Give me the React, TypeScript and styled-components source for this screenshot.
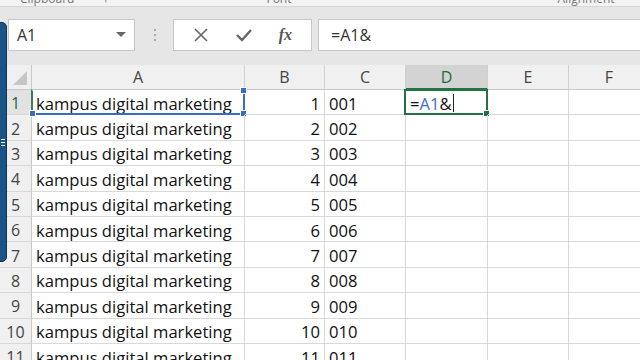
import styled, { createGlobalStyle } from "styled-components";

const GlobalStyle = createGlobalStyle`
  html, body {
    margin: 0;
    padding: 0;
    background: #e6e6e6;
    overflow: hidden;
  }
  body {
    font-family: "Open Sans", "Noto Sans", sans-serif;
  }
`;

const Page = styled.div`
  position: relative;
  width: 640px;
  height: 360px;
  overflow: hidden;
  background: #ffffff;
`;

const RibbonEdge = styled.div`
  height: 6px;
  background: #f3f3f3;
  border-bottom: 1px solid #d6d6d6;
  overflow: hidden;
  display: flex;
  font-size: 12px;
  color: #777;
  line-height: 12px;

  span {
    margin-top: -7px;
  }
`;

const FormulaRow = styled.div`
  display: flex;
  align-items: center;
  height: 58px;
  background: #e6e6e6;
`;

const NameBox = styled.div`
  display: flex;
  align-items: center;
  justify-content: space-between;
  box-sizing: border-box;
  width: 127px;
  height: 32px;
  margin-left: 8px;
  margin-top: -3px;
  padding: 0 8px 0 8px;
  background: #fff;
  border: 1px solid #c6c6c6;
  font-size: 16px;
  color: #333;
`;

const Caret = styled.div`
  width: 0;
  height: 0;
  border-left: 5px solid transparent;
  border-right: 5px solid transparent;
  border-top: 5px solid #666;
`;

const Dots = styled.div`
  display: flex;
  flex-direction: column;
  gap: 3px;
  margin: -3px 17px 0 19px;

  i {
    width: 2px;
    height: 2px;
    border-radius: 1px;
    background: #999;
  }
`;

const ButtonBox = styled.div`
  display: flex;
  align-items: center;
  justify-content: space-around;
  box-sizing: border-box;
  width: 139px;
  height: 32px;
  margin-top: -3px;
  background: #fff;
  border: 1px solid #c6c6c6;
  padding: 0 6px;
`;

const Fx = styled.span`
  font-family: "Liberation Serif", "DejaVu Serif", serif;
  font-style: italic;
  font-weight: bold;
  font-size: 16px;
  color: #555;
`;

const FormulaInput = styled.div`
  flex: 1;
  display: flex;
  align-items: center;
  box-sizing: border-box;
  height: 32px;
  margin-top: -3px;
  margin-left: 6px;
  padding-left: 12px;
  background: #fff;
  border: 1px solid #c6c6c6;
  border-right: none;
  font-size: 16px;
  color: #333;
`;

const Grid = styled.div`
  display: grid;
  grid-template-columns: 32px 213px 80px 81px 82px 81px 81px;
  grid-template-rows: 25px;
  grid-auto-rows: 25.4px;
`;

const ColHead = styled.div<{ $active?: boolean }>`
  display: flex;
  align-items: center;
  justify-content: center;
  box-sizing: border-box;
  background: ${(p) => (p.$active ? "#d3d3d3" : "#f0f0f0")};
  color: ${(p) => (p.$active ? "#1e6b3f" : "#444")};
  border-right: 1px solid #d0d0d0;
  border-bottom: ${(p) => (p.$active ? "2px solid #217346" : "1px solid #c8c8c8")};
  font-size: 16px;
`;

const Corner = styled.div`
  position: relative;
  background: #f0f0f0;
  border-right: 1px solid #c8c8c8;
  border-bottom: 1px solid #c8c8c8;

  &::after {
    content: "";
    position: absolute;
    right: 4px;
    bottom: 4px;
    width: 0;
    height: 0;
    border-left: 14px solid transparent;
    border-bottom: 14px solid #c6c6c6;
  }
`;

const RowHead = styled.div<{ $active?: boolean }>`
  display: flex;
  align-items: center;
  justify-content: center;
  box-sizing: border-box;
  padding-top: 2px;
  background: ${(p) => (p.$active ? "#e2e2e2" : "#f0f0f0")};
  color: ${(p) => (p.$active ? "#1e6b3f" : "#444")};
  border-right: 1px solid #c8c8c8;
  border-bottom: 1px solid #d8d8d8;
  font-size: 16px;
`;

const Cell = styled.div<{ $align?: "left" | "right" }>`
  position: relative;
  display: flex;
  align-items: center;
  justify-content: ${(p) => (p.$align === "right" ? "flex-end" : "flex-start")};
  box-sizing: border-box;
  padding: 2px 4px 0;
  border-right: 1px solid #d8d8d8;
  border-bottom: 1px solid #d8d8d8;
  font-size: 16.6px;
  color: #111;
  white-space: nowrap;
`;

const RefBox = styled.div`
  position: absolute;
  left: -1px;
  top: -1px;
  right: -1px;
  bottom: -1px;
  border: 2px solid #3a6bc2;
  border-left-color: #3c7a55;
  border-top-color: transparent;
  pointer-events: none;
`;

const Handle = styled.i<{ $color: string; $x: "left" | "right"; $y: "top" | "bottom" }>`
  position: absolute;
  ${(p) => p.$x}: -4px;
  ${(p) => p.$y}: -4px;
  width: 5px;
  height: 5px;
  background: ${(p) => p.$color};
  border: 1px solid #fff;
`;

const ActiveBox = styled.div`
  position: absolute;
  left: -2px;
  top: -1px;
  right: -1px;
  bottom: -1px;
  border: 2px solid #217346;
  pointer-events: none;
`;

const Ref = styled.span`
  color: #3c6fc4;
`;

const Cursor = styled.span`
  display: inline-block;
  width: 1px;
  height: 18px;
  margin-left: 1px;
  background: #222;
  vertical-align: middle;
`;

const SidePanel = styled.div`
  position: absolute;
  left: -4px;
  top: 22px;
  width: 11px;
  height: 240px;
  box-sizing: border-box;
  background: #1a5386;
  border: 1px solid #0f3556;
  border-radius: 0 5px 5px 0;
  display: flex;
  flex-direction: column;
  justify-content: center;
  gap: 2px;
  padding-left: 4px;

  i {
    width: 4px;
    height: 1px;
    background: #fff;
  }
`;

const rows = Array.from({ length: 11 }, (_, i) => i + 1);

function App() {
  return (
    <>
      <GlobalStyle />
      <Page>
        <RibbonEdge>
          <span style={{ marginLeft: 20 }}>Clipboard</span>
          <span style={{ marginLeft: 30 }}>⌐</span>
          <span style={{ marginLeft: 155 }}>Font</span>
          <span style={{ marginLeft: 266 }}>Alignment</span>
        </RibbonEdge>
        <FormulaRow>
          <NameBox>
            A1
            <Caret />
          </NameBox>
          <Dots>
            <i />
            <i />
            <i />
          </Dots>
          <ButtonBox>
            <svg width="16" height="16" viewBox="0 0 16 16">
              <path d="M2 2 L14 14 M14 2 L2 14" stroke="#666" strokeWidth="1.6" fill="none" />
            </svg>
            <svg width="18" height="16" viewBox="0 0 18 16">
              <path d="M2 8 L7 13 L16 3" stroke="#666" strokeWidth="2.4" fill="none" />
            </svg>
            <Fx>fx</Fx>
          </ButtonBox>
          <FormulaInput>=A1&amp;</FormulaInput>
        </FormulaRow>
        <Grid>
          <Corner />
          <ColHead>A</ColHead>
          <ColHead>B</ColHead>
          <ColHead>C</ColHead>
          <ColHead $active>D</ColHead>
          <ColHead>E</ColHead>
          <ColHead>F</ColHead>
          {rows.map((n) => (
            <Row key={n} n={n} />
          ))}
        </Grid>
        <SidePanel>
          <i />
          <i />
          <i />
        </SidePanel>
      </Page>
    </>
  );
}

function Row({ n }: { n: number }) {
  const first = n === 1;
  return (
    <>
      <RowHead $active={first}>{n}</RowHead>
      <Cell>
        kampus digital marketing
        {first && (
          <RefBox>
            <Handle $color="#3a6bc2" $x="right" $y="top" />
            <Handle $color="#3a6bc2" $x="right" $y="bottom" />
            <Handle $color="#3a6bc2" $x="left" $y="bottom" />
          </RefBox>
        )}
      </Cell>
      <Cell $align="right">{n}</Cell>
      <Cell>{String(n).padStart(3, "0")}</Cell>
      <Cell>
        {first && (
          <>
            <span>
              =<Ref>A1</Ref>&amp;
            </span>
            <Cursor />
            <ActiveBox>
              <Handle $color="#217346" $x="right" $y="bottom" />
            </ActiveBox>
          </>
        )}
      </Cell>
      <Cell />
      <Cell />
    </>
  );
}

export default App;
